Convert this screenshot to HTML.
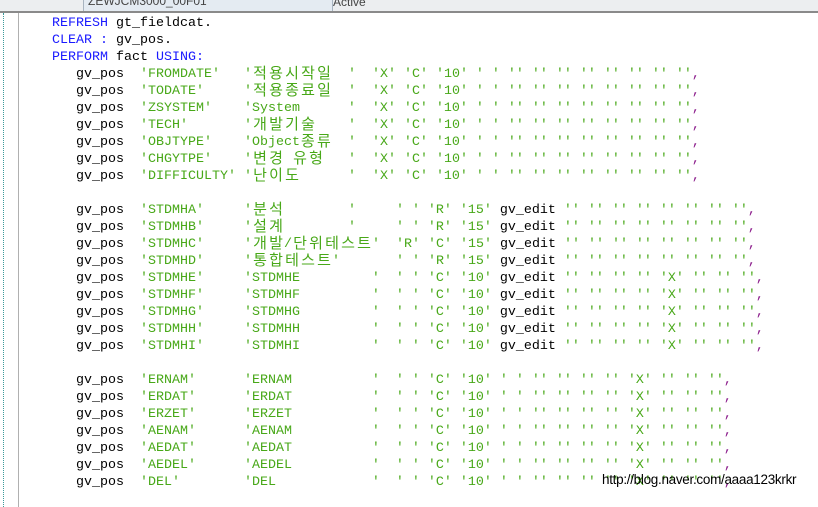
<!DOCTYPE html>
<html><head><meta charset="utf-8"><style>
html,body{margin:0;padding:0;width:818px;height:507px;overflow:hidden;background:#fff;position:relative}
#top{position:absolute;left:0;top:0;width:818px;height:11px;background:#eceef0}
#fld{position:absolute;left:83px;top:-4px;width:244px;height:14px;background:#e4ebf2;border:1px solid #a8b4c0;font:12px "Liberation Sans",sans-serif;color:#444;line-height:8px;padding-left:4px;overflow:hidden}
#act{position:absolute;left:333px;top:-5px;font:12px "Liberation Sans",sans-serif;color:#444}
#line{position:absolute;left:0;top:11px;width:818px;height:2px;background:#8a8a8a}
#dot{position:absolute;left:3px;top:13px;height:494px;border-left:1px dotted #3a9a9a}
#gut{position:absolute;left:18px;top:13px;height:494px;width:1px;background:#b0b0b0}
pre{position:absolute;left:52px;top:15px;margin:0;font:13.33px "Liberation Mono","Courier New",monospace;line-height:17px;color:#48a818}
.b{color:#1a1aff}.k{color:#000}.c{color:#8a1a8a}
i{font-style:normal;display:inline-block;width:16px;text-align:center;font-family:"Noto Sans CJK KR","NanumGothic",sans-serif;font-size:15px;line-height:15px;vertical-align:top;margin-top:-1px}
#url{position:absolute;left:602px;top:472px;font:13.5px "Liberation Sans",sans-serif;color:#000;letter-spacing:-0.3px}
</style></head><body>
<div id="top"><div id="fld">ZEWJCM3000_00F01</div><div id="act">Active</div></div>
<div id="line"></div><div id="dot"></div><div id="gut"></div>
<pre><span class="b">REFRESH</span><span class="k"> gt_fieldcat.</span>
<span class="b">CLEAR</span><span class="k"> </span><span class="b">:</span><span class="k"> gv_pos.</span>
<span class="b">PERFORM</span><span class="k"> fact </span><span class="b">USING:</span>
<span class="k">   gv_pos</span>  'FROMDATE'   '<i>적</i><i>용</i><i>시</i><i>작</i><i>일</i>  '  'X' 'C' '10' ' ' '' '' '' '' '' '' '' ''<span class="c">,</span>
<span class="k">   gv_pos</span>  'TODATE'     '<i>적</i><i>용</i><i>종</i><i>료</i><i>일</i>  '  'X' 'C' '10' ' ' '' '' '' '' '' '' '' ''<span class="c">,</span>
<span class="k">   gv_pos</span>  'ZSYSTEM'    'System      '  'X' 'C' '10' ' ' '' '' '' '' '' '' '' ''<span class="c">,</span>
<span class="k">   gv_pos</span>  'TECH'       '<i>개</i><i>발</i><i>기</i><i>술</i>    '  'X' 'C' '10' ' ' '' '' '' '' '' '' '' ''<span class="c">,</span>
<span class="k">   gv_pos</span>  'OBJTYPE'    'Object<i>종</i><i>류</i>  '  'X' 'C' '10' ' ' '' '' '' '' '' '' '' ''<span class="c">,</span>
<span class="k">   gv_pos</span>  'CHGYTPE'    '<i>변</i><i>경</i> <i>유</i><i>형</i>   '  'X' 'C' '10' ' ' '' '' '' '' '' '' '' ''<span class="c">,</span>
<span class="k">   gv_pos</span>  'DIFFICULTY' '<i>난</i><i>이</i><i>도</i>      '  'X' 'C' '10' ' ' '' '' '' '' '' '' '' ''<span class="c">,</span>

<span class="k">   gv_pos</span>  'STDMHA'     '<i>분</i><i>석</i>        '     ' ' 'R' '15' <span class="k">gv_edit</span> '' '' '' '' '' '' '' ''<span class="c">,</span>
<span class="k">   gv_pos</span>  'STDMHB'     '<i>설</i><i>계</i>        '     ' ' 'R' '15' <span class="k">gv_edit</span> '' '' '' '' '' '' '' ''<span class="c">,</span>
<span class="k">   gv_pos</span>  'STDMHC'     '<i>개</i><i>발</i>/<i>단</i><i>위</i><i>테</i><i>스</i><i>트</i>'  'R' 'C' '15' <span class="k">gv_edit</span> '' '' '' '' '' '' '' ''<span class="c">,</span>
<span class="k">   gv_pos</span>  'STDMHD'     '<i>통</i><i>합</i><i>테</i><i>스</i><i>트</i>'       ' ' 'R' '15' <span class="k">gv_edit</span> '' '' '' '' '' '' '' ''<span class="c">,</span>
<span class="k">   gv_pos</span>  'STDMHE'     'STDMHE         '  ' ' 'C' '10' <span class="k">gv_edit</span> '' '' '' '' 'X' '' '' ''<span class="c">,</span>
<span class="k">   gv_pos</span>  'STDMHF'     'STDMHF         '  ' ' 'C' '10' <span class="k">gv_edit</span> '' '' '' '' 'X' '' '' ''<span class="c">,</span>
<span class="k">   gv_pos</span>  'STDMHG'     'STDMHG         '  ' ' 'C' '10' <span class="k">gv_edit</span> '' '' '' '' 'X' '' '' ''<span class="c">,</span>
<span class="k">   gv_pos</span>  'STDMHH'     'STDMHH         '  ' ' 'C' '10' <span class="k">gv_edit</span> '' '' '' '' 'X' '' '' ''<span class="c">,</span>
<span class="k">   gv_pos</span>  'STDMHI'     'STDMHI         '  ' ' 'C' '10' <span class="k">gv_edit</span> '' '' '' '' 'X' '' '' ''<span class="c">,</span>

<span class="k">   gv_pos</span>  'ERNAM'      'ERNAM          '  ' ' 'C' '10' ' ' '' '' '' '' 'X' '' '' ''<span class="c">,</span>
<span class="k">   gv_pos</span>  'ERDAT'      'ERDAT          '  ' ' 'C' '10' ' ' '' '' '' '' 'X' '' '' ''<span class="c">,</span>
<span class="k">   gv_pos</span>  'ERZET'      'ERZET          '  ' ' 'C' '10' ' ' '' '' '' '' 'X' '' '' ''<span class="c">,</span>
<span class="k">   gv_pos</span>  'AENAM'      'AENAM          '  ' ' 'C' '10' ' ' '' '' '' '' 'X' '' '' ''<span class="c">,</span>
<span class="k">   gv_pos</span>  'AEDAT'      'AEDAT          '  ' ' 'C' '10' ' ' '' '' '' '' 'X' '' '' ''<span class="c">,</span>
<span class="k">   gv_pos</span>  'AEDEL'      'AEDEL          '  ' ' 'C' '10' ' ' '' '' '' '' 'X' '' '' ''<span class="c">,</span>
<span class="k">   gv_pos</span>  'DEL'        'DEL            '  ' ' 'C' '10' ' ' '' '' '' '' 'X' '' '' ''<span class="c">,</span></pre>
<div id="url">http://blog.naver.com/aaaa123krkr</div>
</body></html>
